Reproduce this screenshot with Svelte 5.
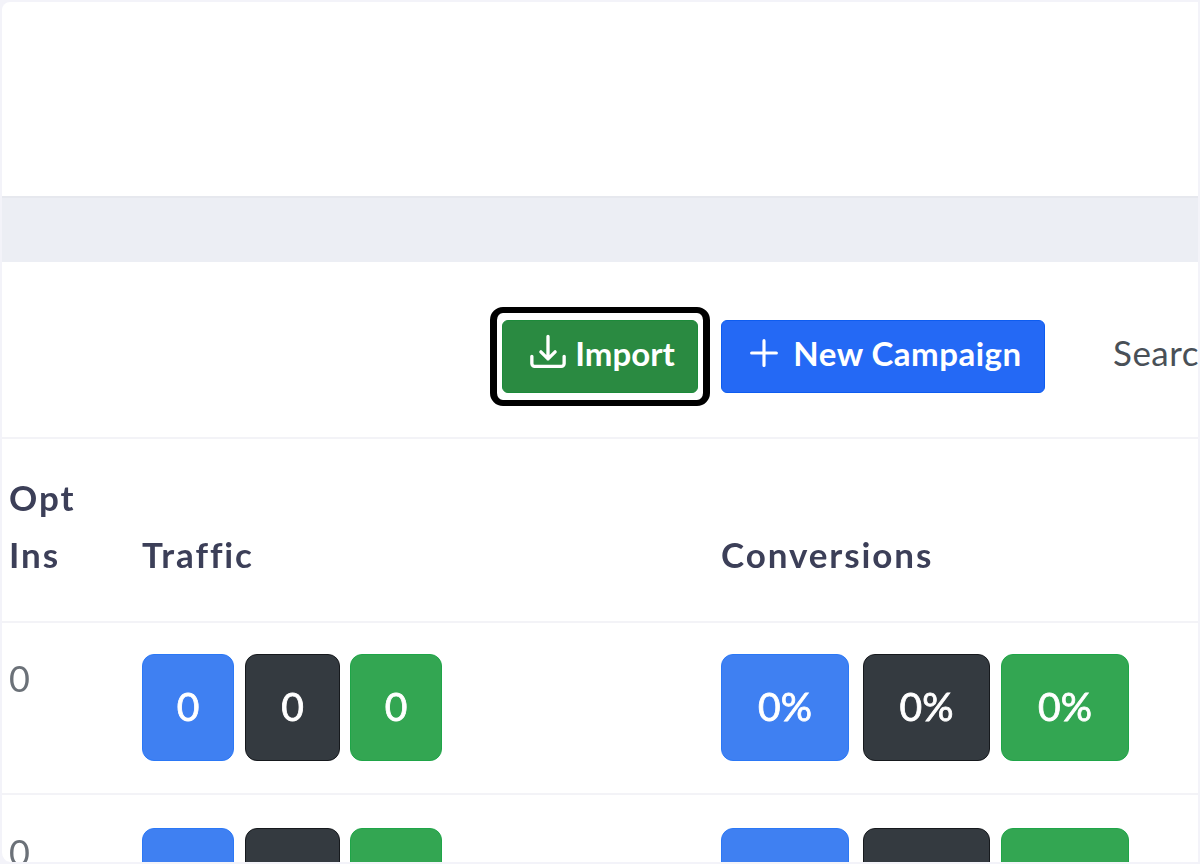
<script>
  const rows = [{ id: 1 }, { id: 2 }];
</script>

<div class="frame">
  <div class="top"></div>
  <div class="band"></div>
  <div class="toolbar">
    <button class="btn import">
      <svg viewBox="0 0 16 16" width="38" height="38" fill="none" stroke="currentColor" stroke-width="1.4" stroke-linecap="round" stroke-linejoin="round">
        <path d="M1.2 9.400v3a1.200 1.200 0 0 0 1.200 1.200h11.200a1.200 1.200 0 0 0 1.200-1.200v-3" />
        <path d="M8 1v9.500M5 7.500l3 3 3-3" />
      </svg>
      <span>Import</span>
    </button>
    <button class="btn campaign">
      <svg viewBox="0 0 16 16" width="36" height="36" fill="none" stroke="currentColor" stroke-width="1.4" stroke-linecap="round">
        <path d="M8 2.500v11M2.500 8h11" />
      </svg>
      <span>New Campaign</span>
    </button>
    <span class="search">Search</span>
  </div>
  <div class="row head">
    <div class="c1">Opt<br />Ins</div>
    <div class="c2">Traffic</div>
    <div class="c3">Conversions</div>
  </div>
  {#each rows as r (r.id)}
    <div class="row body">
      <div class="c1">0</div>
      <div class="badges">
        <span class="badge blue">0</span><span class="badge dark">0</span><span class="badge green">0</span>
      </div>
      <div class="badges wide">
        <span class="badge blue">0%</span><span class="badge dark">0%</span><span class="badge green">0%</span>
      </div>
    </div>
  {/each}
</div>

<style>
  :global(body) {
    margin: 0;
    background: #f3f3f9;
  }
  .frame {
    box-sizing: border-box;
    width: 1198px;
    height: 862px;
    background: #fff;
    border-left: 2px solid #f3f3f9;
    border-top: 2px solid #f3f3f9;
    border-top-left-radius: 10px;
    border-bottom-left-radius: 10px;
    overflow: hidden;
    font-family: Lato, "Liberation Sans", sans-serif;
    color: #495057;
    filter: blur(0.7px);
  }
  .top {
    height: 194px;
    border-bottom: 2px solid #e6e8ee;
  }
  .band {
    height: 64px;
    background: #eceef4;
  }
  .toolbar {
    display: flex;
    align-items: center;
    height: 177px;
    padding: 13px 0 0 500px;
    box-sizing: border-box;
    border-bottom: 2px solid #f3f3f7;
    overflow: hidden;
  }
  .btn {
    display: flex;
    flex-shrink: 0;
    align-items: center;
    justify-content: center;
    gap: 8px;
    box-sizing: border-box;
    height: 73px;
    border: 1px solid;
    border-radius: 6px;
    color: #fff;
    font: 700 33px Lato, "Liberation Sans", sans-serif;
    padding: 0 0 6px;
  }
  .import {
    position: relative;
    width: 196px;
    background: #2a8a41;
    border-color: #1c8a3a;
    padding-left: 4px;
  }
  .import::after {
    content: "";
    position: absolute;
    inset: -14px -13px;
    border: solid #000;
    border-width: 6px 7px;
    border-radius: 13px;
  }
  .campaign {
    width: 324px;
    margin-left: 23px;
    background: #2469f5;
    border-color: #0d5cf0;
    letter-spacing: 0.5px;
    gap: 11px;
    padding-left: 2px;
  }
  .search {
    margin-left: 68px;
    padding-bottom: 8px;
    font-size: 35px;
    white-space: nowrap;
    letter-spacing: 0.5px;
  }
  .row {
    display: grid;
    grid-template-columns: 133px 579px 1fr;
    box-sizing: border-box;
    padding-left: 7px;
    border-bottom: 2px solid #f3f3f7;
  }
  .head {
    height: 184px;
    align-items: end;
    padding-bottom: 38px;
    font-weight: 700;
    font-size: 35px;
    line-height: 57px;
    letter-spacing: 1.9px;
    color: #3c3f58;
  }
  .body {
    height: 172px;
    padding-top: 31px;
    font-size: 36px;
    line-height: 48px;
    color: #6b7178;
  }
  .body:last-child {
    padding-top: 33px;
  }
  .badges {
    display: flex;
    gap: 11px;
  }
  .badge {
    display: flex;
    align-items: center;
    justify-content: center;
    box-sizing: border-box;
    height: 107px;
    width: 92px;
    padding-bottom: 4px;
    border: 1px solid;
    border-radius: 12px;
    color: #fff;
    font-weight: 400;
    font-size: 39px;
    -webkit-text-stroke: 0.8px #fff;
  }
  .blue { background: #3f80f2; border-color: #2b78f6; }
  .dark { background: #343a40; border-color: #16191d; width: 95px; margin-right: -1px; }
  .green { background: #33a652; border-color: #1fa548; }
  .wide .badge { width: 128px; }
  .wide .dark { width: 127px; margin: 0 0 0 3px; }
</style>
